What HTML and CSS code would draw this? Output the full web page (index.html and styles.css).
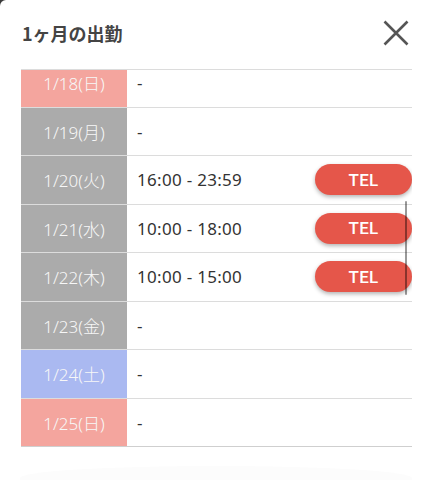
FILE: index.html
```html
<!DOCTYPE html>
<html lang="ja">
<head>
  <meta charset="UTF-8" />
  <meta name="viewport" content="width=device-width, initial-scale=1.0"/>
  <title>1ヶ月の出勤</title>
  <link rel="stylesheet" href="styles.css">
</head>
<body>

<div class="modal">
  <div class="modal-head">
    <h2>1ヶ月の出勤</h2>
    <span class="close-btn">
      <svg width="26" height="26" viewBox="0 0 26 26">
        <path d="M1.5 1.5 L24.5 24.5 M24.5 1.5 L1.5 24.5" stroke="#555" stroke-width="2.6" fill="none"/>
      </svg>
    </span>
  </div>

  <div class="sheet">
    <div class="day-list" id="dayList">
      <div class="day-row"><div class="day sun">1/18(日)</div><div class="shift">-</div></div>
      <div class="day-row"><div class="day">1/19(月)</div><div class="shift">-</div></div>
      <div class="day-row"><div class="day">1/20(火)</div><div class="shift">16:00 - 23:59<span class="tel-btn">TEL</span></div></div>
      <div class="day-row"><div class="day">1/21(水)</div><div class="shift">10:00 - 18:00<span class="tel-btn">TEL</span></div></div>
      <div class="day-row"><div class="day">1/22(木)</div><div class="shift">10:00 - 15:00<span class="tel-btn">TEL</span></div></div>
      <div class="day-row"><div class="day">1/23(金)</div><div class="shift">-</div></div>
      <div class="day-row"><div class="day sat">1/24(土)</div><div class="shift">-</div></div>
      <div class="day-row"><div class="day sun">1/25(日)</div><div class="shift">-</div></div>
    </div>
    <div class="scroll-thumb"></div>
  </div>

  <div class="foot-shade"></div>
</div>

<script>
  // list is opened a little scrolled
  document.getElementById("dayList").scrollTop = 11;
</script>

</body>
</html>
```

FILE: styles.css
```css
:root {
  --text-color: #333;
  --title-color: #444;
  --line-color: #dcdcdc;
  --sun-color: #f4a59e;
  --sat-color: #aab9f1;
  --week-color: #ababab;
  --tel-color: #e5564a;
}

* {
  box-sizing: border-box;
  margin: 0;
  padding: 0;
}

body {
  background: #3a3a3a;
  font-family: "Noto Sans", "Noto Sans CJK JP", sans-serif;
  color: var(--text-color);
}

.modal {
  height: 480px;
  background: #fff;
  border-top-left-radius: 6px;
  overflow: hidden;
}

.modal-head {
  height: 66px;
  display: flex;
  align-items: center;
  justify-content: space-between;
  padding: 0 23px 0 22px;
}

.modal-head h2 {
  font-family: "Noto Sans CJK JP", sans-serif;
  font-size: 18px;
  font-weight: 700;
  color: var(--title-color);
}

.close-btn {
  display: flex;
  cursor: pointer;
}

.sheet {
  position: relative;
  margin: 3px 20px 0 21px;
  border-top: 1px solid var(--line-color);
}

.day-list {
  height: 377px;
  overflow-y: auto;
  scrollbar-width: none;
}

.day-list::-webkit-scrollbar {
  display: none;
}

.day-row {
  display: grid;
  grid-template-columns: 106px 1fr;
  height: 48.5px;
  border-bottom: 1px solid var(--line-color);
}

.day-row:last-child {
  border-bottom-color: #cfcfcf;
}

.day {
  display: flex;
  align-items: center;
  justify-content: center;
  background: var(--week-color);
  color: #f7f7f7;
  font-size: 17px;
  font-weight: 300;
}

.day.sun {
  background: var(--sun-color);
}

.day.sat {
  background: var(--sat-color);
}

.shift {
  display: flex;
  align-items: center;
  justify-content: space-between;
  padding-left: 10px;
  font-size: 17px;
  letter-spacing: 0.3px;
}

.tel-btn {
  width: 97px;
  height: 31px;
  display: flex;
  align-items: center;
  justify-content: center;
  border-radius: 16px;
  background: var(--tel-color);
  color: #fff;
  font-family: Roboto, sans-serif;
  font-size: 17px;
  font-weight: 500;
  letter-spacing: 0.3px;
  box-shadow: 0 2px 4px rgba(0, 0, 0, 0.3);
}

.scroll-thumb {
  position: absolute;
  top: 131px;
  right: 5px;
  width: 2.5px;
  height: 94px;
  border-radius: 2px;
  background: rgba(0, 0, 0, 0.4);
}

.foot-shade {
  margin: 19px 20px 0;
  height: 40px;
  border-radius: 50% 50% 0 0 / 12px 12px 0 0;
  background: #fcfcfc;
}
```
